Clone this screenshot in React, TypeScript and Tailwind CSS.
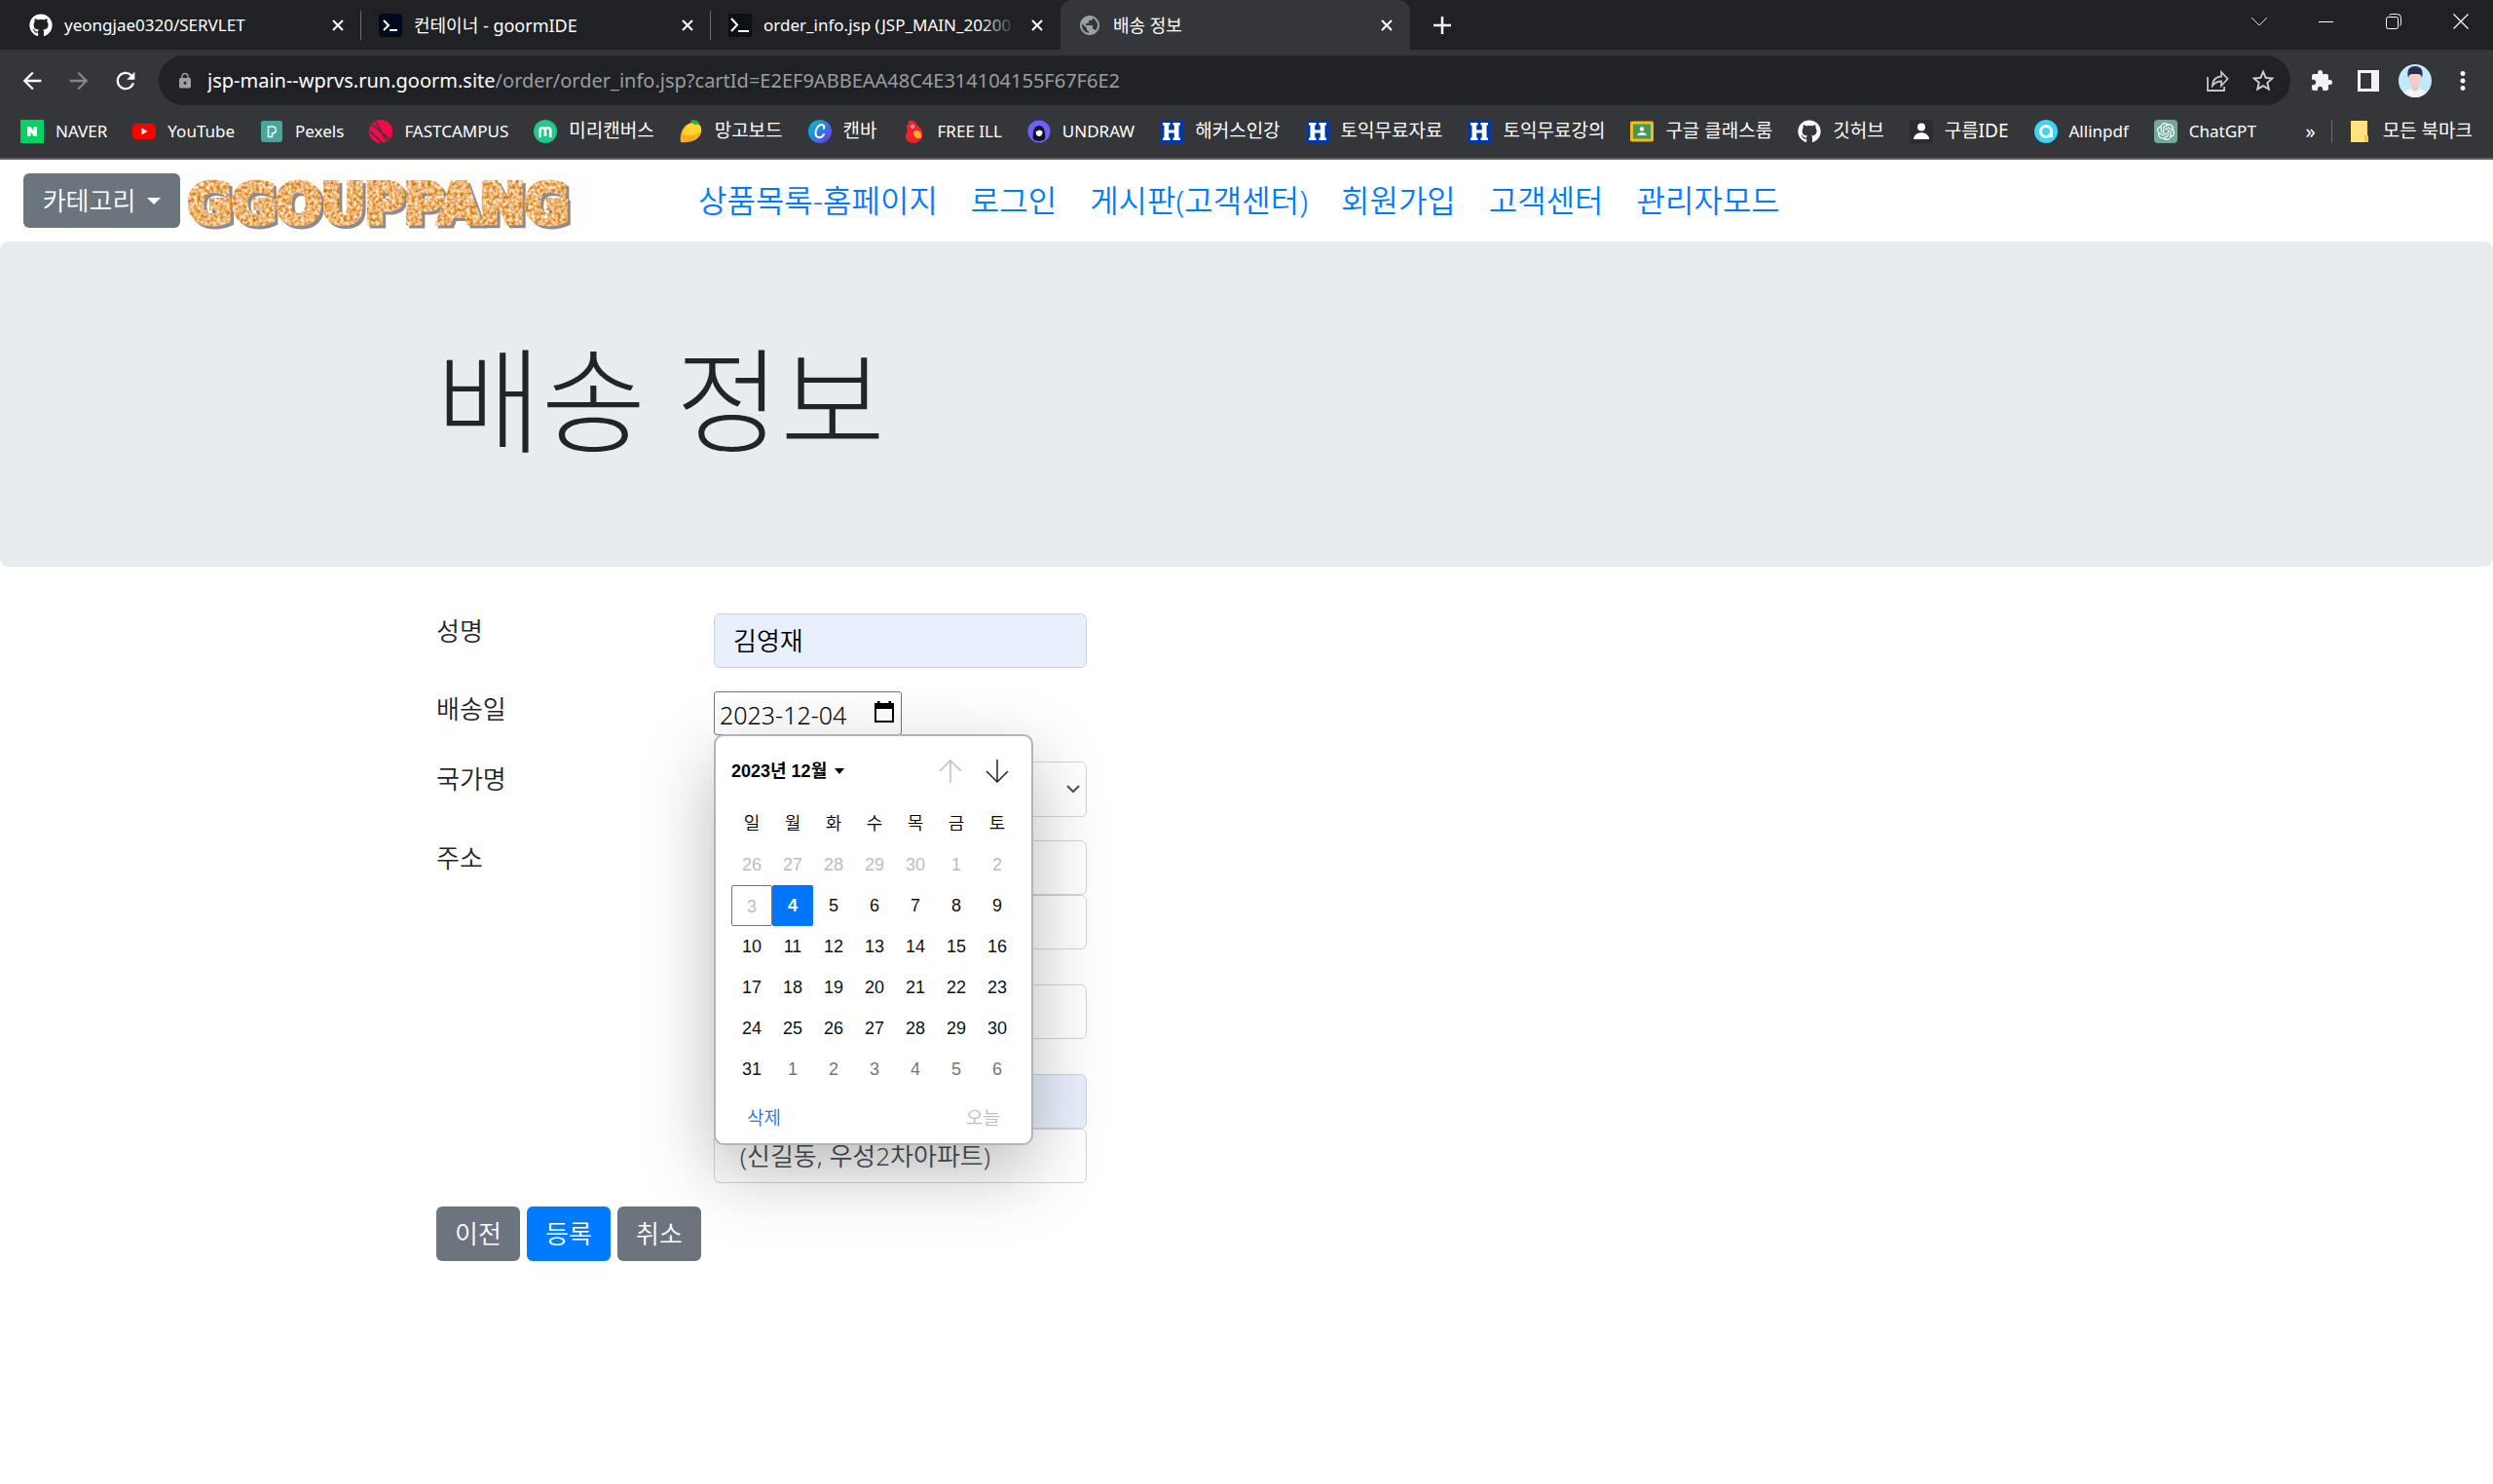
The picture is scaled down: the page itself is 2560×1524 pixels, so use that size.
import React from "react";
import { FaGithub } from "react-icons/fa";
import { SiOpenai } from "react-icons/si";
import { MdExtension, MdLock, MdPublic, MdRefresh, MdStarBorder, MdMoreVert, MdArrowBack, MdArrowForward } from "react-icons/md";

const hangul = /[\u3131-\uD79D]/;

function TerminalIcon({ rounded }: { rounded?: boolean }) {
  return (
    <svg viewBox="0 0 24 24" className="size-6 shrink-0">
      <rect width="24" height="24" rx={rounded ? 4 : 0} fill={rounded ? "#010a1c" : "#0c1017"} />
      <path d={rounded ? "M5 7l5 5-5 5" : "M3 5l6 6.5L3 18"} fill="none" stroke="#fff" strokeWidth="2" />
      <path d={rounded ? "M11 17h8" : "M10 18h11"} stroke="#fff" strokeWidth="2" />
    </svg>
  );
}

function CloseIcon() {
  return (
    <svg viewBox="0 0 12 12" className="size-3" fill="none" stroke="#fff" strokeWidth="2">
      <path d="M1 1l10 10M11 1L1 11" />
    </svg>
  );
}

function Tab({ icon, title, active, sep }: { icon: React.ReactNode; title: string; active?: boolean; sep?: boolean }) {
  const size = hangul.test(title) ? "text-[18px]" : "text-[17px]";
  return (
    <div
      className={
        active
          ? "relative flex h-[51px] w-[359px] min-w-0 items-center rounded-t-[12px] bg-[#35363a] pl-[18px] pr-[18px]"
          : "relative flex h-[51px] w-[359px] min-w-0 items-center pl-[18px] pr-[18px]"
      }
    >
      {icon}
      <button className="ml-3 min-w-0 flex-1 overflow-hidden text-left">
        <span className={`${size} block whitespace-nowrap leading-6 text-white`}>{title}</span>
      </button>
      {title.startsWith("order") && (
        <span className="absolute right-[46px] h-6 w-9 bg-gradient-to-r from-transparent to-[#202124]" />
      )}
      <button aria-label="탭 닫기" className="ml-4"><CloseIcon /></button>
      {sep && <span className="absolute right-0 h-[30px] w-px bg-[#6b6c70]" />}
    </div>
  );
}

function HIcon() {
  return (
    <svg viewBox="0 0 24 24" className="size-6">
      <rect width="24" height="24" fill="#0038a8" />
      <path d="M3 3h7.500v2.500H9.200v5h5.600v-5h-1.300V3H21v2.500h-1.500v13H21V21h-7.500v-2.500h1.300v-5H9.200v5h1.300V21H3v-2.500h1.500v-13H3z" fill="#fff" />
    </svg>
  );
}

const bookmarks: { name: string; icon: React.ReactNode }[] = [
  { name: "NAVER", icon: (
    <svg viewBox="0 0 24 24" className="size-6"><rect width="24" height="24" fill="#03d35f" /><path d="M7 7h3.500l3 4.600V7H17v10h-3.500l-3-4.600V17H7z" fill="#fff" /></svg>
  ) },
  { name: "YouTube", icon: (
    <svg viewBox="0 0 24 24" className="size-6"><rect y="4" width="24" height="16" rx="4" fill="#f00" /><path d="M9.500 8.500v7l6-3.500z" fill="#fff" /></svg>
  ) },
  { name: "Pexels", icon: (
    <svg viewBox="0 0 24 24" className="size-6"><rect x="1" y="1" width="22" height="22" rx="3" fill="#4aa59c" /><path d="M8.500 17.500V7H13a3.500 3.500 0 011 6.800h-1.500v3.700z" fill="none" stroke="#e6f4f2" strokeWidth="1.600" /></svg>
  ) },
  { name: "FASTCAMPUS", icon: (
    <svg viewBox="0 0 24 24" className="size-6"><circle cx="12" cy="12" r="12" fill="#f5094a" /><path d="M3 5l18 15M7 2l11 20M1 12l13 12" stroke="#35363a" strokeWidth="1.500" /></svg>
  ) },
  { name: "미리캔버스", icon: (
    <svg viewBox="0 0 24 24" className="size-6"><circle cx="12" cy="12" r="12" fill="#22c78b" /><path d="M6.500 17v-6a2.700 2.700 0 015.400 0v6-6a2.700 2.700 0 015.400 0v6" fill="none" stroke="#fff" strokeWidth="2.600" strokeLinecap="round" /></svg>
  ) },
  { name: "망고보드", icon: (
    <svg viewBox="0 0 24 24" className="size-6"><path d="M1 23C-.5 15 3 5 12 3c7-1 11 4 10 10-2 8-11 11-21 10z" fill="#ffab24" /><path d="M3 15C4 9 8 4 13 3c7-.5 10 4 9 9-5 4-12 5-19 3z" fill="#ffd52e" /><path d="M11 1c4-1.500 8-.5 9.500 3.500C16 5.500 13 4.500 11 1z" fill="#20b04a" /></svg>
  ) },
  { name: "캔바", icon: (
    <svg viewBox="0 0 24 24" className="size-6"><defs><linearGradient id="cv" x1="0" y1="0" x2="1" y2="1"><stop offset="0" stopColor="#00c4cc" /><stop offset=".5" stopColor="#2b7ee0" /><stop offset="1" stopColor="#7d2ae8" /></linearGradient></defs><circle cx="12" cy="12" r="12" fill="url(#cv)" /><path d="M16 9c.8-2.500-.3-4-2.300-4-3.200 0-6.200 4.500-6.200 8.500 0 3 1.600 4.700 3.800 4.700 2 0 3.700-1.200 4.700-3.200" fill="none" stroke="#fff" strokeWidth="2" strokeLinecap="round" /></svg>
  ) },
  { name: "FREE ILL", icon: (
    <svg viewBox="0 0 24 24" className="size-6"><path d="M6 1c5-1 8 1 9 5 4 2 6 7 5 12-2 5-8 7-13 5-4-2-5-6-3-10 1-3 1-5-1-7 2 0 3-1 3-5z" fill="#f2222c" /><path d="M11 12c5-2 9 1 8 6-4 3-8 0-8-6z" fill="#ffb61a" /><circle cx="10" cy="7" r="1.800" fill="#fff" /><circle cx="10" cy="7" r=".8" fill="#111" /></svg>
  ) },
  { name: "UNDRAW", icon: (
    <svg viewBox="0 0 24 24" className="size-6"><circle cx="12" cy="12" r="11.500" fill="#6c63ff" /><path d="M6 20c-1-5 0-14 6-14s7 9 6 14a11 11 0 01-12 0z" fill="#15132b" /><path d="M8.500 12c2 0 3-1.500 4-1.500s2.500 1.500 3 1.500c0 3-1.500 5-3.500 5s-3.500-2-3.500-5z" fill="#fff" /></svg>
  ) },
  { name: "해커스인강", icon: <HIcon /> },
  { name: "토익무료자료", icon: <HIcon /> },
  { name: "토익무료강의", icon: <HIcon /> },
  { name: "구글 클래스룸", icon: (
    <svg viewBox="0 0 24 24" className="size-6"><rect y="1.500" width="24" height="21" rx="2" fill="#f6bc13" /><rect x="3" y="4.500" width="18" height="15" fill="#3f9b55" /><circle cx="12" cy="9.500" r="2.200" fill="#fff" /><path d="M7 16c1-4 9-4 10 0z" fill="#fff" /></svg>
  ) },
  { name: "깃허브", icon: <FaGithub className="size-6 text-white" /> },
  { name: "구름IDE", icon: (
    <svg viewBox="0 0 24 24" className="size-6"><rect width="24" height="24" fill="#2b2c30" /><circle cx="12" cy="7.500" r="4" fill="#fff" /><path d="M4 20c0-9 16-9 16 0z" fill="#fff" /></svg>
  ) },
  { name: "Allinpdf", icon: (
    <svg viewBox="0 0 24 24" className="size-6"><circle cx="12" cy="12" r="12" fill="#3fd4f7" /><circle cx="12" cy="12" r="5.500" fill="none" stroke="#fff" strokeWidth="3" /><path d="M17.500 11v7" stroke="#fff" strokeWidth="3" /></svg>
  ) },
  { name: "ChatGPT", icon: (
    <span className="flex size-6 items-center justify-center rounded-[4px] bg-[#74aa9c]"><SiOpenai className="size-[18px] text-white" /></span>
  ) },
];

function BrowserChrome() {
  return (
    <header className="border-b-2 border-[#5f6063] bg-[#35363a]">
      <div className="flex h-[51px] bg-[#202124]">
        <div className="flex pl-3">
          <Tab sep icon={<FaGithub className="size-6 shrink-0 text-white" />} title="yeongjae0320/SERVLET" />
          <Tab sep icon={<TerminalIcon rounded />} title="컨테이너 - goormIDE" />
          <Tab icon={<TerminalIcon />} title="order_info.jsp (JSP_MAIN_20200" />
          <Tab active icon={<MdPublic className="size-6 shrink-0 text-[#9aa0a6]" />} title="배송 정보" />
        </div>
        <button aria-label="새 탭" className="ml-6">
          <svg viewBox="0 0 18 18" className="size-[18px]" stroke="#fff" strokeWidth="2.500"><path d="M9 0v18M0 9h18" /></svg>
        </button>
        <div className="ml-auto flex h-[44px] items-center gap-[53px] pr-[25px]">
          <button aria-label="탭 검색"><svg viewBox="0 0 16 16" className="size-4" fill="none" stroke="#ddd"><path d="M0 4l8 8 8-8" /></svg></button>
          <button aria-label="최소화"><svg viewBox="0 0 16 16" className="size-4" fill="none" stroke="#fff"><path d="M0 8.500h15" /></svg></button>
          <button aria-label="이전 크기로"><svg viewBox="0 0 16 16" className="size-4" fill="none" stroke="#fff"><rect x=".5" y="3.500" width="12" height="12" rx="2" /><path d="M3.500 1.500q1-1 3-1h5q4 0 4 4v5q0 2-1 3" /></svg></button>
          <button aria-label="닫기"><svg viewBox="0 0 16 16" className="size-4" fill="none" stroke="#fff" strokeWidth="1.200"><path d="M.5.500l15 15M15.500.500l-15 15" /></svg></button>
        </div>
      </div>

      <div className="flex h-[63px] items-center pr-4 pl-[19px]">
        <button aria-label="뒤로"><MdArrowBack className="size-7 text-white" /></button>
        <button aria-label="앞으로" className="ml-5"><MdArrowForward className="size-7 text-[#85868a]" /></button>
        <button aria-label="새로고침" className="ml-5"><MdRefresh className="size-7 text-white" /></button>
        <div className="ml-5 flex h-[51px] min-w-0 flex-1 items-center rounded-full bg-[#202124] pr-[14px] pl-[18px]">
          <MdLock className="size-[18px] shrink-0 text-[#9aa0a6]" />
          <p className="ml-[14px] min-w-0 flex-1 truncate text-[20px] leading-8 text-[#9a9da1]">
            <span className="text-white">jsp-main--wprvs.run.goorm.site</span>/order/order_info.jsp?cartId=E2EF9ABBEAA48C4E314104155F67F6E2
          </p>
          <button aria-label="공유">
            <svg viewBox="0 0 24 24" className="size-6" fill="none" stroke="#c4c7c9" strokeWidth="1.800"><path d="M2 8v14h17v-4" /><path d="M7 17c0-6 4-9.500 9-9.500V3l6.500 7-6.500 7v-4.500c-4 0-6.500 1-9 4.500z" /></svg>
          </button>
          <button aria-label="북마크에 추가" className="ml-[21px]"><MdStarBorder className="size-7 text-[#d0d2d4]" /></button>
        </div>
        <button aria-label="확장 프로그램" className="ml-5"><MdExtension className="size-6 text-[#f1f3f4]" /></button>
        <button aria-label="측면 패널" className="ml-6">
          <svg viewBox="0 0 24 24" className="size-6"><rect x="1" y="1" width="22" height="22" fill="#f1f3f4" /><rect x="4" y="4" width="11" height="16" fill="#35363a" /></svg>
        </button>
        <button aria-label="프로필" className="ml-[19px]">
          <svg viewBox="0 0 34 34" className="size-[34px]">
            <defs><clipPath id="av"><circle cx="17" cy="17" r="17" /></clipPath></defs>
            <g clipPath="url(#av)"><rect width="34" height="34" fill="#c3e9fb" /><path d="M4 34c1-7 6-9 13-9s12 2 13 9z" fill="#f1f4fb" /><path d="M14 20h6v6l-3 2-3-2z" fill="#eec5bd" /><ellipse cx="17" cy="14" rx="6" ry="9" fill="#f2cfc8" /><path d="M10 14C8 6 11 2 17 2s9 4 7 12c-1-4-2-4-7-4s-6 0-7 4z" fill="#28304f" /></g>
          </svg>
        </button>
        <button aria-label="메뉴" className="ml-[17px]"><MdMoreVert className="size-[30px] text-white" /></button>
      </div>

      <nav aria-label="북마크" className="flex h-12 items-center px-[21px] pb-[6px] text-white">
        <div className="flex items-center gap-[26px]">
          {bookmarks.map((b) => (
            <a key={b.name} href="#" className="flex items-center gap-3 whitespace-nowrap">
              {b.icon}
              <span className={hangul.test(b.name) ? "pb-[2px] text-[19px] leading-6" : "text-[17px] leading-6"}>{b.name}</span>
            </a>
          ))}
        </div>
        <button aria-label="북마크 더보기" className="ml-auto text-[20px] leading-6">»</button>
        <span className="ml-4 h-6 w-px bg-[#6b6c70]" />
        <a href="#" className="ml-[18px] flex items-center gap-[14px] whitespace-nowrap">
          <svg viewBox="0 0 20 24" className="h-6 w-5"><path d="M1 1h17v15h1v7H1z" fill="#ffe27d" /><path d="M15 16h4v7h-4z" fill="#f5c84c" /></svg>
          <span className="pb-[2px] text-[19px] leading-6">모든 북마크</span>
        </a>
      </nav>
    </header>
  );
}

function Logo() {
  return (
    <svg viewBox="0 0 412 56" className="h-14 w-[412px] overflow-visible" role="img" aria-label="GGOUPPANG">
      <defs>
        <filter id="grain" x="0" y="0" width="1" height="1.100" colorInterpolationFilters="sRGB">
          <feTurbulence type="fractalNoise" baseFrequency=".3" numOctaves="2" seed="4" result="n" />
          <feColorMatrix in="n" type="matrix" values=".4 0 0 0 .74  .9 0 0 0 .26  1.7 0 0 0 -.4  0 0 0 0 1" result="c" />
          <feComposite in="c" in2="SourceAlpha" operator="in" result="t" />
          <feOffset in="SourceAlpha" dx="3" dy="3" result="o" />
          <feFlood floodColor="#8e8a8e" />
          <feComposite in2="o" operator="in" result="s" />
          <feMerge><feMergeNode in="s" /><feMergeNode in="t" /></feMerge>
        </filter>
      </defs>
      <rect width="412" height="56" fill="#fdfefc" />
      <g filter="url(#grain)">
        <rect width="412" height="56" fill="none" />
        <text x="0" y="50" fontFamily="DejaVu Sans" fontWeight="700" fontSize="55" stroke="#000" strokeWidth="6">GGOUPPANG</text>
      </g>
    </svg>
  );
}

const links = ["상품목록-홈페이지", "로그인", "게시판(고객센터)", "회원가입", "고객센터", "관리자모드"];
const weekdays = ["일", "월", "화", "수", "목", "금", "토"];
const weeks = [
  [26, 27, 28, 29, 30, 1, 2],
  [3, 4, 5, 6, 7, 8, 9],
  [10, 11, 12, 13, 14, 15, 16],
  [17, 18, 19, 20, 21, 22, 23],
  [24, 25, 26, 27, 28, 29, 30],
  [31, 1, 2, 3, 4, 5, 6],
];

function dayClass(week: number, day: number) {
  const base = "block size-[42px] rounded-[2px] text-center text-[18px] leading-[42px]";
  if (week === 0) return `${base} text-[#bdbdbd]`;
  if (week === 1 && day === 3) return `${base} border border-[#767676] leading-10 text-[#bdbdbd]`;
  if (week === 1 && day === 4) return `${base} bg-[#0075ff] font-bold text-white`;
  if (week === 5 && day < 10) return `${base} text-[#757575]`;
  return `${base} text-[#101010]`;
}

function Calendar() {
  return (
    <div
      role="dialog"
      aria-label="날짜 선택"
      className="absolute top-full -left-px z-10 w-[328px] rounded-[10px] border-2 border-[#b4b4b4] bg-white px-4 pt-4 pb-[9px] font-['Liberation_Sans','Noto_Sans_CJK_KR',sans-serif] shadow-[0_26px_76px_rgba(0,0,0,0.28)]"
    >
      <div className="flex h-10 items-center">
        <button className="flex items-center gap-2 text-[18px] leading-6 font-bold text-black">
          2023년 12월
          <svg viewBox="0 0 10 6" className="h-[6px] w-[10px]"><path d="M0 0h10L5 6z" /></svg>
        </button>
        <button aria-label="이전 달" className="ml-auto">
          <svg viewBox="0 0 24 24" className="size-6" fill="none" stroke="#bdbdbd" strokeWidth="1.500"><path d="M12 24V1M1 12L12 1l11 11" /></svg>
        </button>
        <button aria-label="다음 달" className="mr-[7px] ml-6">
          <svg viewBox="0 0 24 24" className="size-6" fill="none" stroke="#222" strokeWidth="1.500"><path d="M12 0v23M1 12l11 11 11-11" /></svg>
        </button>
      </div>
      <table className="mt-[13px] border-collapse">
        <thead>
          <tr>
            {weekdays.map((d) => (
              <th key={d} className="h-[42px] w-[42px] p-0 text-center text-[18px] leading-[42px] font-[350] text-black">{d}</th>
            ))}
          </tr>
        </thead>
        <tbody>
          {weeks.map((w, i) => (
            <tr key={i}>
              {w.map((d) => (
                <td key={d} className="p-0"><button type="button" className={dayClass(i, d)}>{d}</button></td>
              ))}
            </tr>
          ))}
        </tbody>
      </table>
      <div className="mt-[14px] flex justify-between px-4 text-[19px] leading-8 font-[350]">
        <button type="button" className="text-[#1a78e0]">삭제</button>
        <button type="button" className="text-[#bdbdbd]">오늘</button>
      </div>
    </div>
  );
}

const control = "block h-14 w-full rounded-[6px] border border-[#ced4da] bg-white px-[19px] pb-[2px] text-[26px] leading-9 font-[350] text-[#495057]";
const filled = "block h-14 w-full rounded-[6px] border border-[#ced4da] bg-[#e8f0fe] px-[19px] pb-[2px] text-[26px] leading-9 font-[350] text-black";
const labelText = "w-[285px] shrink-0 self-start text-[26px] leading-9 font-[350]";

function OrderForm() {
  return (
    <form className="mx-auto flex w-full max-w-[1710px] flex-col gap-6 px-[23px] pt-12" onSubmit={(e) => e.preventDefault()}>
      <div className="flex">
        <label htmlFor="name" className={labelText}>성명</label>
        <div className="w-[383px]"><input id="name" className={filled} defaultValue="김영재" /></div>
      </div>
      <div className="flex h-12">
        <label htmlFor="date" className={labelText}>배송일</label>
        <div className="relative flex h-[45px] w-[193px] items-center rounded-[3px] border border-[#767676] bg-white pr-[6px] pl-[5px] text-black">
          <input id="date" className="mt-[2px] w-[150px] flex-1 text-[25px] leading-9 font-[350] outline-none" defaultValue="2023-12-04" />
          <button type="button" aria-label="달력 열기" className="pb-1">
            <svg viewBox="0 0 22 22" className="size-[22px]"><path d="M1 2h20v20H1zM3 8v12h16V8z" fillRule="evenodd" /><path d="M4 0h2.500v3H4zM15.500 0H18v3h-2.500z" /></svg>
          </button>
          <Calendar />
        </div>
      </div>
      <div className="flex">
        <label htmlFor="country" className={labelText}>국가명</label>
        <div className="relative w-[383px]">
          <select id="country" className={`${control} h-[57px] appearance-none`} defaultValue="kr">
            <option value="kr">대한민국</option>
          </select>
          <svg viewBox="0 0 14 9" className="pointer-events-none absolute top-6 right-[7px] h-[9px] w-[14px]" fill="none" stroke="#495057" strokeWidth="2"><path d="M1 1l6 6 6-6" /></svg>
        </div>
      </div>
      <div className="flex">
        <label htmlFor="address" className={labelText}>주소</label>
        <div className="w-[383px]">
          <input id="address" className={control} />
          <input aria-label="우편번호" className={control} />
          <input aria-label="도로명 주소" className={`${control} mt-9`} />
          <input aria-label="상세 주소" className={`${filled} mt-9`} />
          <input aria-label="참고 항목" className={control} defaultValue=" (신길동, 우성2차아파트)" />
        </div>
      </div>
      <div className="flex gap-[7px] text-[26px] leading-9 font-[350] text-white">
        <a href="#" className="flex h-14 w-[86px] items-center justify-center rounded-[6px] bg-[#6c757d]">이전</a>
        <button type="submit" className="h-14 w-[86px] rounded-[6px] bg-[#007bff]">등록</button>
        <a href="#" className="flex h-14 w-[86px] items-center justify-center rounded-[6px] bg-[#6c757d]">취소</a>
      </div>
    </form>
  );
}

export default function App() {
  return (
    <div className="min-h-screen bg-white font-['Noto_Sans','Noto_Sans_CJK_KR',sans-serif] text-[#212529]">
      <BrowserChrome />
      <div className="flex h-[84px] items-center px-6">
        <button className="flex h-14 w-[161px] items-center justify-center gap-3 rounded-[6px] bg-[#6c757d] text-[26px] leading-9 font-[350] text-white">
          카테고리
          <svg viewBox="0 0 14 7" className="h-[7px] w-[14px]"><path d="M0 0h14L7 7z" fill="#fff" /></svg>
        </button>
        <a href="#" className="ml-2"><Logo /></a>
        <nav className="ml-[112px] flex gap-[34px] pb-px text-[32px] leading-[45px] font-[350] text-[#007bff]">
          {links.map((l) => (
            <a key={l} href="#" className="whitespace-nowrap">{l}</a>
          ))}
        </nav>
      </div>
      <section className="rounded-[9px] bg-[#e9ecef] pt-[98px] pb-[94px]">
        <div className="mx-auto max-w-[1710px] px-[23px]">
          <h1 className="mb-3 text-[117px] leading-[130px] font-light">배송 정보</h1>
        </div>
      </section>
      <OrderForm />
    </div>
  );
}
